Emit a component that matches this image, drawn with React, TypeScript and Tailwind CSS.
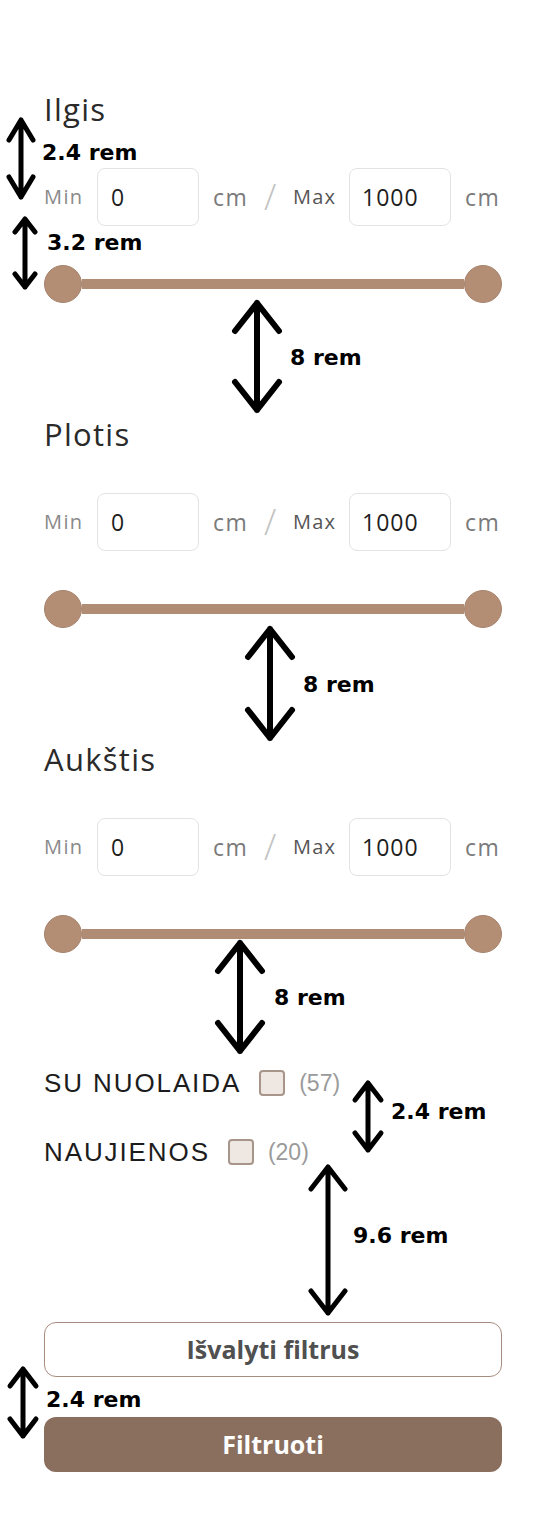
import React from 'react';

type Dim = { id: string; label: string };

const DIMS: Dim[] = [
    { id: 'ilgis', label: 'Ilgis' },
    { id: 'plotis', label: 'Plotis' },
    { id: 'aukstis', label: 'Aukštis' },
];

// spacing notes drawn over the form: arrow centre x, tips, head size, stroke
type Note = { x: number; y1: number; y2: number; hw: number; d: number; sw: number; text: string; tx: number; ty: number };

const NOTES: Note[] = [
    { x: 21, y1: 120, y2: 197, hw: 12, d: 20, sw: 5, text: '2.4 rem', tx: 42, ty: 153 },
    { x: 25, y1: 219, y2: 287, hw: 10, d: 13, sw: 5, text: '3.2 rem', tx: 47, ty: 243 },
    { x: 257, y1: 303, y2: 410, hw: 22, d: 28, sw: 6, text: '8 rem', tx: 290, ty: 358 },
    { x: 270, y1: 629, y2: 738, hw: 22, d: 28, sw: 6, text: '8 rem', tx: 303, ty: 685 },
    { x: 240, y1: 943, y2: 1051, hw: 22, d: 28, sw: 6, text: '8 rem', tx: 274, ty: 998 },
    { x: 368, y1: 1083, y2: 1150, hw: 13, d: 17, sw: 5, text: '2.4 rem', tx: 391, ty: 1112 },
    { x: 328, y1: 1167, y2: 1313, hw: 17, d: 22, sw: 5, text: '9.6 rem', tx: 353, ty: 1236 },
    { x: 23, y1: 1369, y2: 1436, hw: 13, d: 17, sw: 5, text: '2.4 rem', tx: 46, ty: 1400 },
];

const arrowPath = (n: Note) =>
    `M${n.x} ${n.y1}L${n.x} ${n.y2}` +
    `M${n.x - n.hw} ${n.y1 + n.d}L${n.x} ${n.y1}L${n.x + n.hw} ${n.y1 + n.d}` +
    `M${n.x - n.hw} ${n.y2 - n.d}L${n.x} ${n.y2}L${n.x + n.hw} ${n.y2 - n.d}`;

const RangeInputs: React.FC = () => (
    <div className="flex items-center h-[58px]">
        <span className="w-[38px] text-[20px] tracking-[1.4px] text-[#8a8a8a]">Min</span>
        <div className="ml-[15px] w-[102px] h-[58px] border border-[#e3e3e3] rounded-[8px] flex items-center pl-[13px] text-[23px] tracking-[1px] text-[#1e1e1e]">0</div>
        <span className="ml-[14px] w-[38px] text-[23px] tracking-[1.6px] text-[#7a7a7a]">cm</span>
        <span className="ml-[13px] w-[16px] text-[36px] font-light text-[#c2c2c2] leading-none">/</span>
        <span className="ml-[13px] w-[43px] text-[20px] tracking-[1.2px] text-[#555]">Max</span>
        <div className="ml-[13px] w-[102px] h-[58px] border border-[#e3e3e3] rounded-[8px] flex items-center pl-[12px] text-[23px] tracking-[1px] text-[#1e1e1e]">1000</div>
        <span className="ml-[14px] text-[23px] tracking-[1.6px] text-[#7a7a7a]">cm</span>
    </div>
);

const Slider: React.FC = () => (
    <div className="flex items-center h-[38px]">
        <div className="w-[38px] h-[38px] rounded-full bg-[#b48d75] border border-[#a6836c] shrink-0" />
        <div className="flex-1 h-[10px] bg-[#b18c75]" />
        <div className="w-[38px] h-[38px] rounded-full bg-[#b48d75] border border-[#a6836c] shrink-0" />
    </div>
);

const Toggle: React.FC<{ label: string; count: number }> = ({ label, count }) => (
    <div className="flex items-center h-[32px]">
        <span className="text-[26px] tracking-[1.9px] text-[#1c1c1c] leading-[32px]" style={{ fontFamily: '"Liberation Sans", Arial, sans-serif' }}>{label}</span>
        <span className="ml-[18px] w-[26px] h-[26px] rounded-[4px] bg-[#efe7e1] border-2 border-[#a8958a]" />
        <span className="ml-[14px] text-[23px] text-[#9a9a9a]" style={{ fontFamily: '"Liberation Sans", Arial, sans-serif' }}>({count})</span>
    </div>
);

export default function App() {
    return (
        <div className="relative w-[540px] h-[1521px] bg-white overflow-hidden" style={{ fontFamily: '"Open Sans", "Noto Sans", sans-serif' }}>
            <div className="pl-[44px] pr-[38px] pt-[90px] flex flex-col">
                {DIMS.map((d, i) => (
                    <div key={d.id} className={`flex flex-col ${i > 0 ? 'mt-[112px]' : ''}`}>
                        <h3 className="text-[31px] leading-[38px] tracking-[1.3px] text-[#2a2a2a]">{d.label}</h3>
                        <div className="mt-[40px]">
                            <RangeInputs />
                        </div>
                        <div className="mt-[39px]">
                            <Slider />
                        </div>
                    </div>
                ))}

                <div className="mt-[114px] flex flex-col gap-[37px]">
                    <Toggle label="SU NUOLAIDA" count={57} />
                    <Toggle label="NAUJIENOS" count={20} />
                </div>

                <button className="mt-[154px] h-[55px] rounded-[12px] border border-[#a88c80] bg-white text-[25px] font-bold text-[#505050]">
                    Išvalyti filtrus
                </button>
                <button className="mt-[40px] h-[55px] rounded-[12px] bg-[#8b6f5e] text-[25px] font-bold text-white">
                    Filtruoti
                </button>
            </div>

            {/* spacing annotations */}
            <svg className="absolute inset-0 pointer-events-none" width="540" height="1521" viewBox="0 0 540 1521" fill="none">
                {NOTES.map((n, i) => (
                    <path key={i} d={arrowPath(n)} stroke="#000" strokeWidth={n.sw} strokeLinecap="round" strokeLinejoin="round" />
                ))}
            </svg>
            {NOTES.map((n, i) => (
                <div
                    key={i}
                    className="absolute text-[22px] leading-[26px] font-bold text-black whitespace-nowrap"
                    style={{ left: n.tx, top: n.ty - 13, fontFamily: '"DejaVu Sans", sans-serif' }}
                >
                    {n.text}
                </div>
            ))}
        </div>
    );
}
